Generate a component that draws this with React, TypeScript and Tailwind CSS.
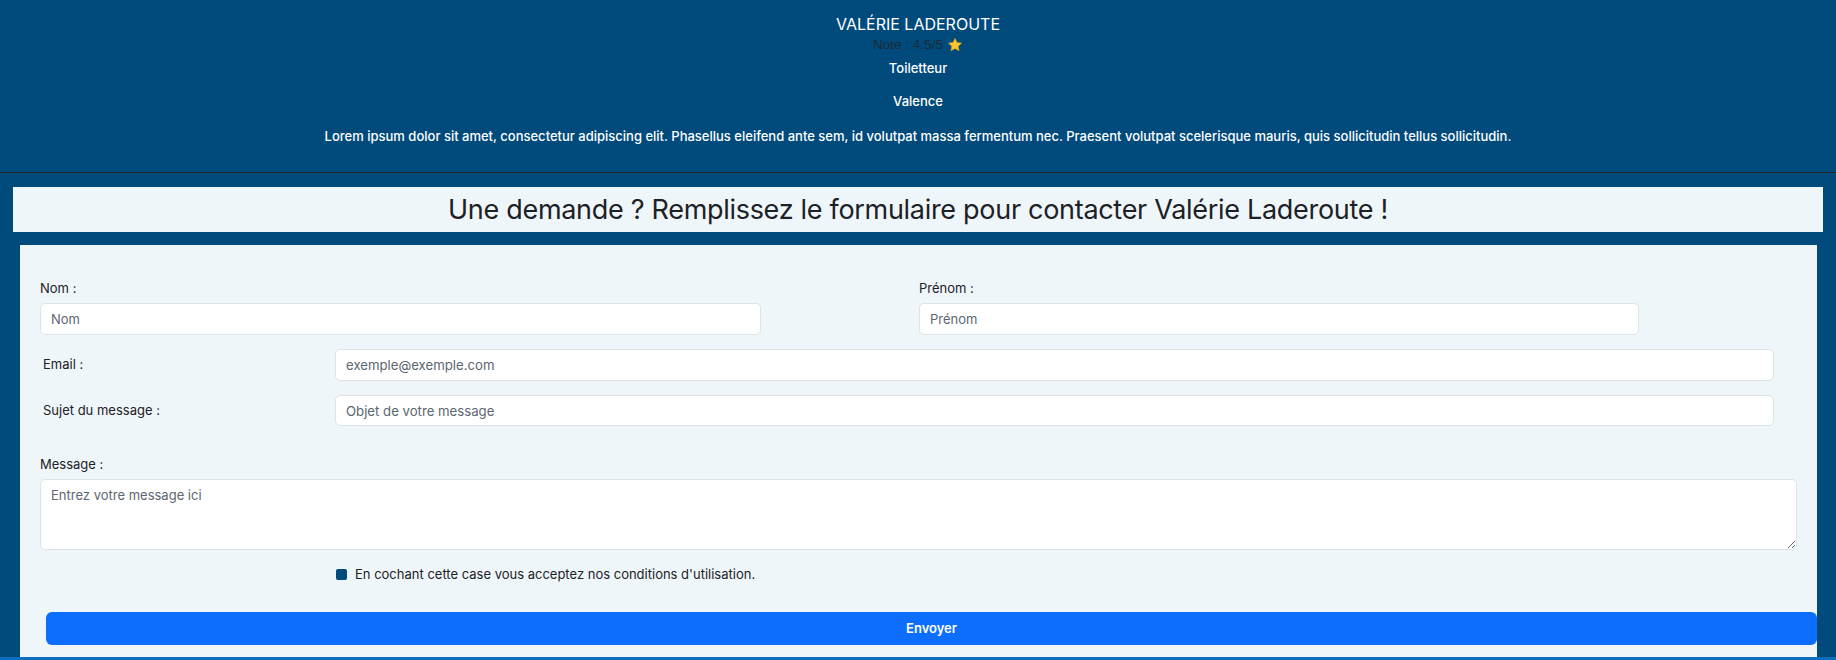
import React from 'react';

function Star() {
  return (
    <svg width="16" height="16" viewBox="0 0 24 24" className="inline-block">
      <path
        d="M12 2.2l2.9 6.2 6.8.8-5 4.6 1.3 6.7L12 17.2l-6 3.3 1.3-6.7-5-4.6 6.8-.8z"
        fill="#fdc52c"
        stroke="#f0a818"
        strokeWidth="1"
        strokeLinejoin="round"
      />
    </svg>
  );
}

export default function App() {
  return (
    <div className="w-[1836px] h-[660px] overflow-hidden bg-[#004a7c] font-['Inter','Liberation_Sans',sans-serif]">
      <header className="h-[173px] border-b border-[#1f2a33] flex flex-col items-center text-white">
        <h2 className="mt-[14px] text-[16px] leading-[20px]">VALÉRIE LADEROUTE</h2>
        <div className="flex items-center gap-[4px] mt-[2px] text-[13.5px] leading-[18px] text-[#1c2a38] font-['Liberation_Sans',sans-serif]">
          <span>Note : 4.5/5</span>
          <Star />
        </div>
        <p className="mt-[5px] text-[13px] leading-[18px] font-medium">Toiletteur</p>
        <p className="mt-[15px] text-[13px] leading-[18px] font-medium">Valence</p>
        <p className="mt-[17px] text-[13px] leading-[18px] font-medium">
          Lorem ipsum dolor sit amet, consectetur adipiscing elit. Phasellus eleifend ante sem, id volutpat massa fermentum nec. Praesent volutpat scelerisque mauris, quis sollicitudin tellus sollicitudin.
        </p>
      </header>

      <div className="mt-[14px] ml-[13px] w-[1810px] h-[45px] bg-[#eff6fa] flex items-center justify-center">
        <h1 className="text-[27px] leading-[32px] text-[#1d2126] tracking-[-0.3px]">
          Une demande ? Remplissez le formulaire pour contacter Valérie Laderoute !
        </h1>
      </div>

      <form className="mt-[13px] ml-[20px] w-[1797px] h-[412px] bg-[#eff6fa] pl-[20px] pt-[35px] text-[13px] text-[#1d2126]">
        <div className="grid grid-cols-[879px_1fr]">
          <div>
            <label className="block leading-[16px]">Nom :</label>
            <input
              placeholder="Nom"
              className="mt-[7px] w-[721px] h-[32px] rounded-[5px] border border-[#dde2e6] bg-white px-[10px] text-[13px] placeholder:text-[#5c6670] outline-none"
            />
          </div>
          <div>
            <label className="block leading-[16px]">Prénom :</label>
            <input
              placeholder="Prénom"
              className="mt-[7px] w-[720px] h-[32px] rounded-[5px] border border-[#dde2e6] bg-white px-[10px] text-[13px] placeholder:text-[#5c6670] outline-none"
            />
          </div>
        </div>

        <div className="mt-[14px] flex items-center">
          <label className="w-[295px] pl-[3px]">Email :</label>
          <input
            placeholder="exemple@exemple.com"
            className="w-[1439px] h-[32px] rounded-[5px] border border-[#dde2e6] bg-white px-[10px] text-[13.2px] placeholder:text-[#5c6670] outline-none"
          />
        </div>

        <div className="mt-[14px] flex items-center">
          <label className="w-[295px] pl-[3px]">Sujet du message :</label>
          <input
            placeholder="Objet de votre message"
            className="w-[1439px] h-[31px] rounded-[5px] border border-[#dde2e6] bg-white px-[10px] text-[13.2px] placeholder:text-[#5c6670] outline-none"
          />
        </div>

        <label className="block mt-[30px] leading-[16px]">Message :</label>
        <textarea
          placeholder="Entrez votre message ici"
          className="block mt-[7px] w-[1757px] h-[71px] rounded-[5px] border border-[#dde2e6] bg-white px-[10px] py-[6px] text-[13px] placeholder:text-[#5c6670] outline-none"
        />

        <div className="mt-[16px] ml-[296px] flex items-center gap-[8px]">
          <span className="w-[11px] h-[11px] rounded-[2px] bg-[#004a7c]" />
          <span className="leading-[16px]">En cochant cette case vous acceptez nos conditions d'utilisation.</span>
        </div>

        <button
          type="button"
          className="mt-[30px] ml-[6px] w-[1771px] h-[33px] rounded-[6px] bg-[#0d6efd] text-white text-[13px] font-semibold"
        >
          Envoyer
        </button>
      </form>

      <div className="h-[3px] bg-[#0a6ebd]" />
    </div>
  );
}
